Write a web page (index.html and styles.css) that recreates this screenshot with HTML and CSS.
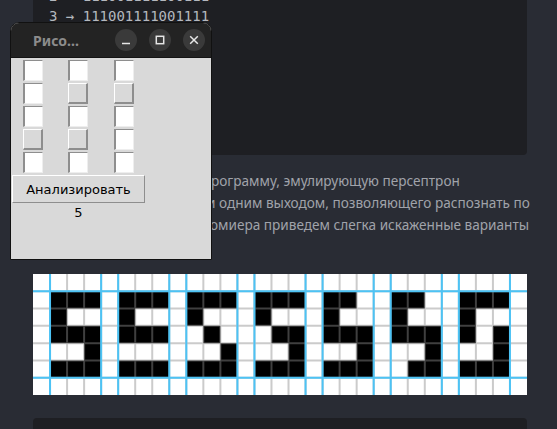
FILE: index.html
```html
<!DOCTYPE html>
<html lang="ru">
<head>
<meta charset="utf-8">
<title>Персептрон</title>
<link rel="stylesheet" href="styles.css">
</head>
<body>
<main class="page">
<pre class="code">2 → 111001111100111
3 → 111001111001111</pre>

<p class="text">
<span class="line"><span class="lead">Напишем п</span>рограмму, эмулирующую персептрон</span>
<span class="line"><span class="lead">с 15 входами </span>и одним выходом, позволяющего распознать по</span>
<span class="line"><span class="lead">цифру. Для пр</span>омиера приведем слегка искаженные варианты</span>
</p>

<div class="figure">
<svg class="digits" width="494" height="121" viewBox="0 0 29 7" preserveAspectRatio="none" aria-label="Искаженные варианты цифры 5">
<rect width="29" height="7" fill="#ffffff"/>
<path fill="#000000" d="M1 1h3v1h-3zM1 2h1v1h-1zM1 3h3v1h-3zM3 4h1v1h-1zM1 5h3v1h-3z
M5 1h3v1h-3zM5 2h1v1h-1zM5 3h3v1h-3zM5 5h3v1h-3z
M9 1h3v1h-3zM9 2h1v1h-1zM10 3h1v1h-1zM11 4h1v1h-1zM9 5h3v1h-3z
M13 1h3v1h-3zM13 2h1v1h-1zM14 3h2v1h-2zM15 4h1v1h-1zM13 5h3v1h-3z
M17 1h2v1h-2zM17 2h1v1h-1zM17 3h3v1h-3zM19 4h1v1h-1zM17 5h3v1h-3z
M21 1h2v1h-2zM21 2h1v1h-1zM21 3h3v1h-3zM23 4h1v1h-1zM22 5h2v1h-2z
M25 1h3v1h-3zM25 2h1v1h-1zM25 3h1v1h-1zM27 3h1v1h-1zM27 4h1v1h-1zM25 5h3v1h-3z"/>
<path fill="none" stroke="#8c8c8c" stroke-opacity="0.45" stroke-width="2" vector-effect="non-scaling-stroke" d="M1 0V7M2 0V7M3 0V7M4 0V7M5 0V7M6 0V7M7 0V7M8 0V7M9 0V7M10 0V7M11 0V7M12 0V7M13 0V7M14 0V7M15 0V7M16 0V7M17 0V7M18 0V7M19 0V7M20 0V7M21 0V7M22 0V7M23 0V7M24 0V7M25 0V7M26 0V7M27 0V7M28 0V7M0 1H29M0 2H29M0 3H29M0 4H29M0 5H29M0 6H29"/>
<path fill="none" stroke="#4cc3f5" stroke-width="2" vector-effect="non-scaling-stroke" d="M1 0V7M4 0V7M5 0V7M8 0V7M9 0V7M12 0V7M13 0V7M16 0V7M17 0V7M20 0V7M21 0V7M24 0V7M25 0V7M28 0V7M0 1H29M0 6H29"/>
</svg>
</div>

<pre class="code code-next"></pre>
</main>

<section class="window">
  <header class="titlebar">
    <span class="title">Рисо...</span>
    <div class="controls">
      <span class="ctl"><svg width="22" height="22" viewBox="0 0 22 22"><path d="M7 14.5h8" stroke="#e6e6e6" stroke-width="1.6"/></svg></span>
      <span class="ctl"><svg width="22" height="22" viewBox="0 0 22 22"><rect x="7.3" y="7.3" width="7.4" height="7.4" fill="none" stroke="#e6e6e6" stroke-width="1.5"/></svg></span>
      <span class="ctl"><svg width="22" height="22" viewBox="0 0 22 22"><path d="M7.2 7.2l7.6 7.6M14.8 7.2l-7.6 7.6" stroke="#e6e6e6" stroke-width="1.5"/></svg></span>
    </div>
  </header>
  <div class="client">
    <div class="cells">
      <span class="cell"></span><span class="cell"></span><span class="cell"></span>
      <span class="cell"></span><span class="cell on"></span><span class="cell on"></span>
      <span class="cell"></span><span class="cell"></span><span class="cell"></span>
      <span class="cell on"></span><span class="cell on"></span><span class="cell"></span>
      <span class="cell"></span><span class="cell"></span><span class="cell"></span>
    </div>
    <button class="analyze" type="button">Анализировать</button>
    <div class="result">5</div>
  </div>
</section>
</body>
</html>
```

FILE: styles.css
```css
html, body {
  margin: 0;
  padding: 0;
}

body {
  background: #292c34;
  width: 557px;
  height: 429px;
  overflow: hidden;
  position: relative;
}

.page {
  width: 494px;
  margin: -30px 0 0 33px;
}

.code {
  margin: 0;
  padding: 16px 16px 129px;
  background: #1e1f23;
  border-radius: 4px;
  color: #b4b8bf;
  font-family: "DejaVu Sans Mono", monospace;
  font-size: 14px;
  line-height: 20px;
}

.text {
  margin: 15px 0 0;
  color: #a0a3aa;
  font-family: "Noto Sans", sans-serif;
  font-size: 13.6px;
  line-height: 22px;
}

.line {
  display: block;
  white-space: nowrap;
}

.lead {
  display: inline-block;
  vertical-align: top;
  text-align: right;
  width: 178px;
}

.line:nth-child(2) .lead {
  width: 174px;
}

.line:nth-child(3) .lead {
  width: 177px;
}

.figure {
  margin-top: 38px;
  height: 121px;
}

.digits {
  display: block;
}

.code-next {
  margin-top: 23px;
  height: 60px;
  padding: 0;
}

/* floating application window */
.window {
  position: absolute;
  left: 10px;
  top: 22px;
  width: 202px;
  height: 238px;
  box-sizing: border-box;
  border: 1px solid #111111;
  border-radius: 9px 9px 0 0;
  overflow: hidden;
  background: #d9d9d9;
  display: flex;
  flex-direction: column;
}

.titlebar {
  height: 35px;
  flex: none;
  background: #232323;
  border-bottom: 1px solid #141414;
  box-sizing: border-box;
  display: flex;
  align-items: center;
  padding-left: 22px;
  padding-right: 6px;
}

.title {
  flex: 1;
  color: #8c8c8c;
  font-family: "Noto Sans", sans-serif;
  font-weight: bold;
  font-size: 14px;
}

.controls {
  display: flex;
  gap: 12px;
}

.ctl {
  width: 22px;
  height: 22px;
  border-radius: 50%;
  background: #3a3a3a;
  display: block;
}

.ctl svg {
  display: block;
}

.client {
  flex: 1;
  padding: 2px 0 0 1px;
  font-family: "DejaVu Sans", sans-serif;
  font-size: 13px;
  color: #000;
}

.cells {
  display: grid;
  grid-template-columns: 45px 46px 20px;
  grid-auto-rows: 21px;
  row-gap: 2px;
  margin-left: 11px;
}

.cell {
  width: 20px;
  height: 21px;
  box-sizing: border-box;
  background: #ffffff;
  border-style: solid;
  border-width: 1px 1px 1px 2px;
  border-color: #8e8e8e #eeeeee #eeeeee #8e8e8e;
}

.cell.on {
  background: #d9d9d9;
  border-width: 1px 2px 2px 1px;
  border-color: #ffffff #8e8e8e #8e8e8e #ffffff;
}

.analyze {
  display: block;
  margin: 2px 0 0;
  width: 133px;
  height: 28px;
  padding: 0;
  background: #d9d9d9;
  border-style: solid;
  border-width: 1px;
  border-color: #ffffff #8e8e8e #8e8e8e #ffffff;
  font-family: "DejaVu Sans", sans-serif;
  font-size: 13px;
  color: #000;
}

.result {
  width: 133px;
  text-align: center;
  line-height: 20px;
}
```
